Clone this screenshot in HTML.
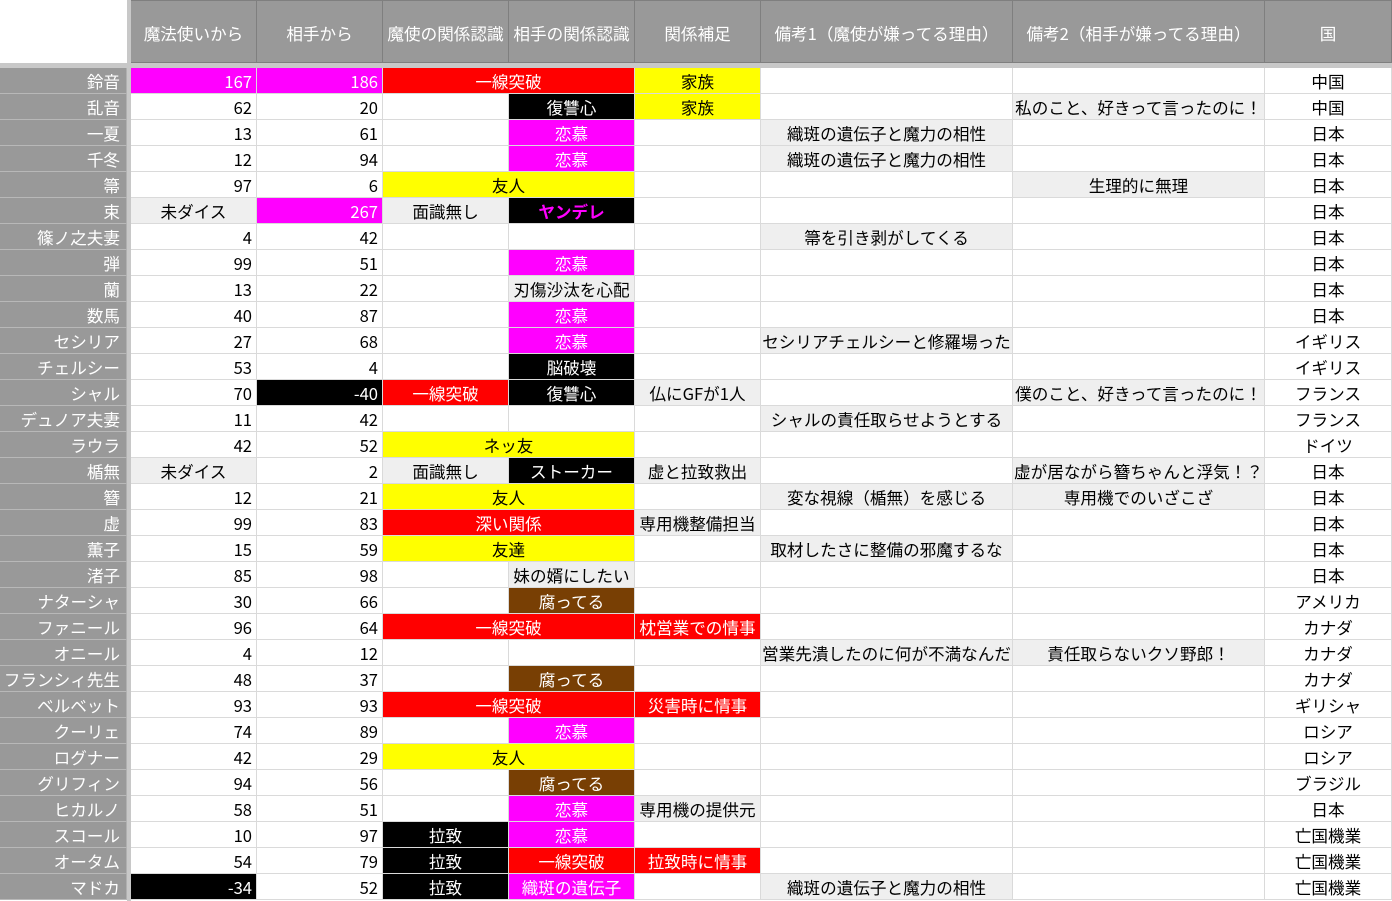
<!DOCTYPE html>
<html><head><meta charset="utf-8"><style>
*{box-sizing:border-box;margin:0;padding:0}
body{width:1392px;height:901px;overflow:hidden;background:#fff;font-family:"Noto Sans CJK JP","Liberation Sans",sans-serif;font-size:16.6px;color:#000;position:relative}
.sep{position:absolute;background:#c8c8c8}
.hdr{position:absolute;top:0;left:131px;height:63px;display:grid;grid-template-columns:126px 126px 126px 126px 126px 252px 252px 127px}
.hdr div{background:#999;color:#fff;border-right:1px solid #7f7f7f;border-top:1px solid #7f7f7f;border-bottom:1px solid #7f7f7f;display:flex;align-items:center;justify-content:center;white-space:nowrap;font-size:16.6px;padding-top:2px}
.row{position:absolute;left:0;height:26px;display:grid;grid-template-columns:127px 4px 126px 126px 126px 126px 126px 252px 252px 127px;width:1392px}
.row div{border-right:1px solid #dadada;border-bottom:1px solid #dadada;line-height:25px;padding-top:1px;height:26px;white-space:nowrap;overflow:visible;text-align:center}
.row .l{background:#999;color:#fff;text-align:right;padding-right:6px;border-right:1px solid #b0b0b0;border-bottom:1px solid #b8b8b8}
.row .s{background:#c8c8c8;border:none}
.n{text-align:right!important;padding-right:4px}
.m{background:#f0f;color:#fff}
.r{background:#f00;color:#fff}
.y{background:#ff0}
.k{background:#000;color:#fff}
.b{background:#783f04;color:#fff}
.g{background:#efefef}
.s2{grid-column:span 2}
</style></head><body>
<div class="sep" style="left:127px;top:0;width:4px;height:901px"></div>
<div class="sep" style="left:0;top:63px;width:1392px;height:5px"></div>
<div style="position:absolute;left:0;top:0;width:127px;height:63px;background:#fff"></div>
<div class="hdr"><div>魔法使いから</div><div>相手から</div><div>魔使の関係認識</div><div>相手の関係認識</div><div>関係補足</div><div>備考1（魔使が嫌ってる理由）</div><div>備考2（相手が嫌ってる理由）</div><div>国</div></div>

<div class="row" style="top:68px"><div class="l">鈴音</div><div class="s"></div><div class="n m">167</div><div class="n m">186</div><div class="r s2">一線突破</div><div class="y">家族</div><div></div><div></div><div>中国</div></div>
<div class="row" style="top:94px"><div class="l">乱音</div><div class="s"></div><div class="n">62</div><div class="n">20</div><div></div><div class="k">復讐心</div><div class="y">家族</div><div></div><div class="g">私のこと、好きって言ったのに！</div><div>中国</div></div>
<div class="row" style="top:120px"><div class="l">一夏</div><div class="s"></div><div class="n">13</div><div class="n">61</div><div></div><div class="m">恋慕</div><div></div><div class="g">織斑の遺伝子と魔力の相性</div><div></div><div>日本</div></div>
<div class="row" style="top:146px"><div class="l">千冬</div><div class="s"></div><div class="n">12</div><div class="n">94</div><div></div><div class="m">恋慕</div><div></div><div class="g">織斑の遺伝子と魔力の相性</div><div></div><div>日本</div></div>
<div class="row" style="top:172px"><div class="l">箒</div><div class="s"></div><div class="n">97</div><div class="n">6</div><div class="y s2">友人</div><div></div><div></div><div class="g">生理的に無理</div><div>日本</div></div>
<div class="row" style="top:198px"><div class="l">束</div><div class="s"></div><div class="g">未ダイス</div><div class="n m">267</div><div class="g">面識無し</div><div class="k" style="color:#f0f;font-weight:bold">ヤンデレ</div><div></div><div></div><div></div><div>日本</div></div>
<div class="row" style="top:224px"><div class="l">篠ノ之夫妻</div><div class="s"></div><div class="n">4</div><div class="n">42</div><div></div><div></div><div></div><div class="g">箒を引き剥がしてくる</div><div></div><div>日本</div></div>
<div class="row" style="top:250px"><div class="l">弾</div><div class="s"></div><div class="n">99</div><div class="n">51</div><div></div><div class="m">恋慕</div><div></div><div></div><div></div><div>日本</div></div>
<div class="row" style="top:276px"><div class="l">蘭</div><div class="s"></div><div class="n">13</div><div class="n">22</div><div></div><div class="g">刃傷沙汰を心配</div><div></div><div></div><div></div><div>日本</div></div>
<div class="row" style="top:302px"><div class="l">数馬</div><div class="s"></div><div class="n">40</div><div class="n">87</div><div></div><div class="m">恋慕</div><div></div><div></div><div></div><div>日本</div></div>
<div class="row" style="top:328px"><div class="l">セシリア</div><div class="s"></div><div class="n">27</div><div class="n">68</div><div></div><div class="m">恋慕</div><div></div><div class="g">セシリアチェルシーと修羅場った</div><div></div><div>イギリス</div></div>
<div class="row" style="top:354px"><div class="l">チェルシー</div><div class="s"></div><div class="n">53</div><div class="n">4</div><div></div><div class="k">脳破壊</div><div></div><div></div><div></div><div>イギリス</div></div>
<div class="row" style="top:380px"><div class="l">シャル</div><div class="s"></div><div class="n">70</div><div class="n k">-40</div><div class="r">一線突破</div><div class="k">復讐心</div><div class="g">仏にGFが1人</div><div></div><div class="g">僕のこと、好きって言ったのに！</div><div>フランス</div></div>
<div class="row" style="top:406px"><div class="l">デュノア夫妻</div><div class="s"></div><div class="n">11</div><div class="n">42</div><div></div><div></div><div></div><div class="g">シャルの責任取らせようとする</div><div></div><div>フランス</div></div>
<div class="row" style="top:432px"><div class="l">ラウラ</div><div class="s"></div><div class="n">42</div><div class="n">52</div><div class="y s2">ネッ友</div><div></div><div></div><div></div><div>ドイツ</div></div>
<div class="row" style="top:458px"><div class="l">楯無</div><div class="s"></div><div class="g">未ダイス</div><div class="n">2</div><div class="g">面識無し</div><div class="k">ストーカー</div><div class="g">虚と拉致救出</div><div></div><div class="g">虚が居ながら簪ちゃんと浮気！？</div><div>日本</div></div>
<div class="row" style="top:484px"><div class="l">簪</div><div class="s"></div><div class="n">12</div><div class="n">21</div><div class="y s2">友人</div><div></div><div class="g">変な視線（楯無）を感じる</div><div class="g">専用機でのいざこざ</div><div>日本</div></div>
<div class="row" style="top:510px"><div class="l">虚</div><div class="s"></div><div class="n">99</div><div class="n">83</div><div class="r s2">深い関係</div><div class="g">専用機整備担当</div><div></div><div></div><div>日本</div></div>
<div class="row" style="top:536px"><div class="l">薫子</div><div class="s"></div><div class="n">15</div><div class="n">59</div><div class="y s2">友達</div><div></div><div class="g">取材したさに整備の邪魔するな</div><div></div><div>日本</div></div>
<div class="row" style="top:562px"><div class="l">渚子</div><div class="s"></div><div class="n">85</div><div class="n">98</div><div></div><div class="g">妹の婿にしたい</div><div></div><div></div><div></div><div>日本</div></div>
<div class="row" style="top:588px"><div class="l">ナターシャ</div><div class="s"></div><div class="n">30</div><div class="n">66</div><div></div><div class="b">腐ってる</div><div></div><div></div><div></div><div>アメリカ</div></div>
<div class="row" style="top:614px"><div class="l">ファニール</div><div class="s"></div><div class="n">96</div><div class="n">64</div><div class="r s2">一線突破</div><div class="r">枕営業での情事</div><div></div><div></div><div>カナダ</div></div>
<div class="row" style="top:640px"><div class="l">オニール</div><div class="s"></div><div class="n">4</div><div class="n">12</div><div></div><div></div><div></div><div class="g">営業先潰したのに何が不満なんだ</div><div class="g">責任取らないクソ野郎！</div><div>カナダ</div></div>
<div class="row" style="top:666px"><div class="l">フランシィ先生</div><div class="s"></div><div class="n">48</div><div class="n">37</div><div></div><div class="b">腐ってる</div><div></div><div></div><div></div><div>カナダ</div></div>
<div class="row" style="top:692px"><div class="l">ベルベット</div><div class="s"></div><div class="n">93</div><div class="n">93</div><div class="r s2">一線突破</div><div class="r">災害時に情事</div><div></div><div></div><div>ギリシャ</div></div>
<div class="row" style="top:718px"><div class="l">クーリェ</div><div class="s"></div><div class="n">74</div><div class="n">89</div><div></div><div class="m">恋慕</div><div></div><div></div><div></div><div>ロシア</div></div>
<div class="row" style="top:744px"><div class="l">ログナー</div><div class="s"></div><div class="n">42</div><div class="n">29</div><div class="y s2">友人</div><div></div><div></div><div></div><div>ロシア</div></div>
<div class="row" style="top:770px"><div class="l">グリフィン</div><div class="s"></div><div class="n">94</div><div class="n">56</div><div></div><div class="b">腐ってる</div><div></div><div></div><div></div><div>ブラジル</div></div>
<div class="row" style="top:796px"><div class="l">ヒカルノ</div><div class="s"></div><div class="n">58</div><div class="n">51</div><div></div><div class="m">恋慕</div><div class="g">専用機の提供元</div><div></div><div></div><div>日本</div></div>
<div class="row" style="top:822px"><div class="l">スコール</div><div class="s"></div><div class="n">10</div><div class="n">97</div><div class="k">拉致</div><div class="m">恋慕</div><div></div><div></div><div></div><div>亡国機業</div></div>
<div class="row" style="top:848px"><div class="l">オータム</div><div class="s"></div><div class="n">54</div><div class="n">79</div><div class="k">拉致</div><div class="r">一線突破</div><div class="r">拉致時に情事</div><div></div><div></div><div>亡国機業</div></div>
<div class="row" style="top:874px"><div class="l">マドカ</div><div class="s"></div><div class="n k">-34</div><div class="n">52</div><div class="k">拉致</div><div class="m">織斑の遺伝子</div><div></div><div class="g">織斑の遺伝子と魔力の相性</div><div></div><div>亡国機業</div></div>
</body></html>
